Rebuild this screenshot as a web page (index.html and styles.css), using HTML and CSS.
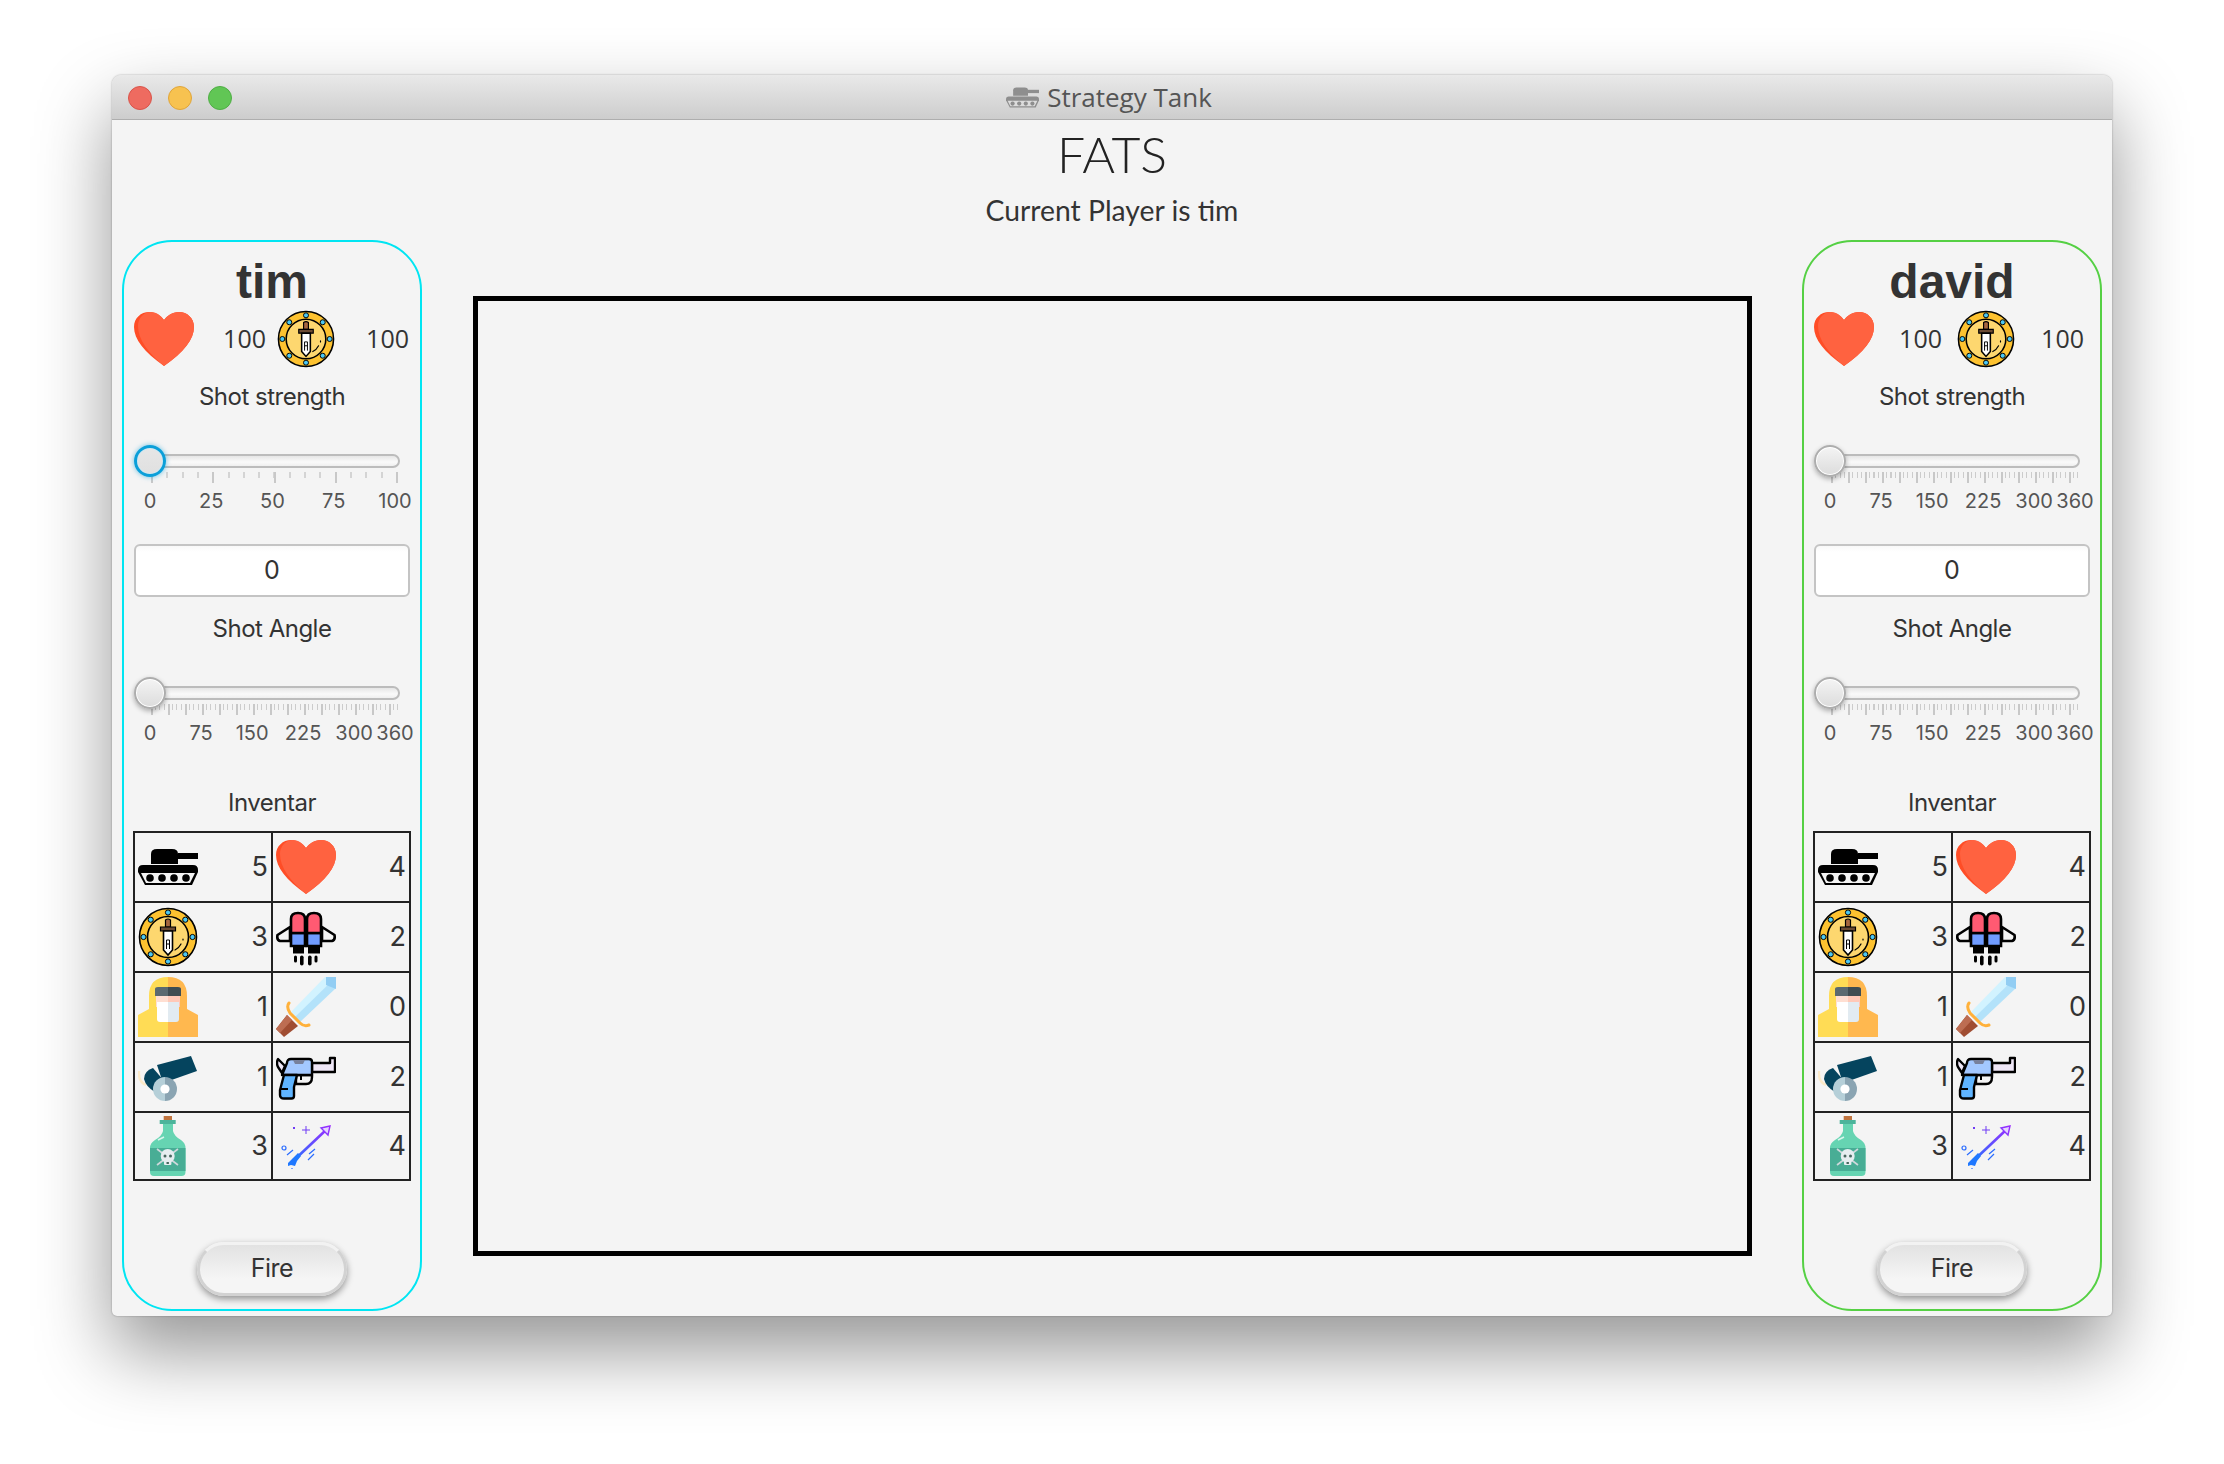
FILE: index.html
```html
<html>
<head>
    <meta charset="utf-8">
    <title>Strategy Tank</title>
    <link rel="stylesheet" href="styles.css">
</head>
<body>
    <svg class="sprites" xmlns="http://www.w3.org/2000/svg">
        <defs>
            <linearGradient id="arrow-grad" gradientUnits="userSpaceOnUse" x1="13" y1="49" x2="54" y2="10">
                <stop offset="0" stop-color="#1f78ff"/>
                <stop offset="1" stop-color="#9a2bff"/>
            </linearGradient>
        </defs>
        <symbol id="i-tank" viewBox="0 0 60 60">
            <path fill="currentColor" d="M13 27V17Q13 12 19 12H34Q40 12 40 17V27Z"/>
            <rect fill="currentColor" x="40" y="16" width="20" height="6"/>
            <path fill="currentColor" d="M5 28H55Q60 28 60 33V35L54 48H7L0 35V33Q0 28 5 28Z"/>
            <path fill="var(--track, #f4f4f4)" d="M3 36H57L52 46H8Z"/>
            <g fill="currentColor">
                <circle cx="12" cy="41" r="3.8"/>
                <circle cx="24" cy="41" r="3.8"/>
                <circle cx="36" cy="41" r="3.8"/>
                <circle cx="48" cy="41" r="3.8"/>
            </g>
        </symbol>
        <symbol id="i-heart" viewBox="0 0 60 60">
            <path fill="#ff4d26" d="M30 57C10 43 0 30 0 18C0 9 7 3 15 3C22 3 27 7 30 11C33 7 38 3 45 3C53 3 60 9 60 18C60 30 50 43 30 57Z"/>
            <path fill="#ff6240" d="M30 57C14 44 4 30 4 17C4 9 10 3 17 3C23 3 27 7 30 11C33 7 38 3 45 3C53 3 60 9 60 18C60 30 50 43 30 57Z"/>
        </symbol>
        <symbol id="i-coin" viewBox="0 0 60 60">
            <circle cx="30" cy="30" r="28.5" fill="#fdc230" stroke="#000" stroke-width="1.6"/>
            <circle cx="30" cy="30" r="20.5" fill="#fdd76f" stroke="#000" stroke-width="1.6"/>
            <g fill="#4cc8f2" stroke="#000" stroke-width="1">
                <circle cx="30" cy="5.5" r="2.6"/>
                <circle cx="47.3" cy="12.7" r="2.6"/>
                <circle cx="54.5" cy="30" r="2.6"/>
                <circle cx="47.3" cy="47.3" r="2.6"/>
                <circle cx="30" cy="54.5" r="2.6"/>
                <circle cx="12.7" cy="47.3" r="2.6"/>
                <circle cx="5.5" cy="30" r="2.6"/>
                <circle cx="12.7" cy="12.7" r="2.6"/>
            </g>
            <path fill="#a5673f" stroke="#000" stroke-width="1.2" d="M27.5 20V13Q30 11 32.5 13V20Z"/>
            <path fill="#6b4a32" stroke="#000" stroke-width="1.2" d="M22.5 20H37.5V24H22.5Z"/>
            <path fill="#fff" stroke="#000" stroke-width="1.6" d="M25.5 24H34.5V43L30 48L25.5 43Z"/>
            <path fill="none" stroke="#000" stroke-width="1" d="M28.5 42V33H31.5V42M28.5 37H31.5"/>
            <path fill="none" stroke="#000" stroke-width="1.2" stroke-linecap="round" d="M43 37Q41 41 37 43M45 32V33"/>
        </symbol>
        <symbol id="i-jet" viewBox="0 0 60 60">
            <path fill="#f4f4f4" stroke="#000" stroke-width="2.6" stroke-linejoin="round" d="M14 20L1.5 28Q0.5 33 4 34H14Z"/>
            <path fill="#f4f4f4" stroke="#000" stroke-width="2.6" stroke-linejoin="round" d="M46 20L58.5 28Q59.5 33 56 34H46Z"/>
            <path fill="#6f9bff" stroke="#000" stroke-width="2.6" d="M15 26H29V39H15Z"/>
            <path fill="#6f9bff" stroke="#000" stroke-width="2.6" d="M31 26H45V39H31Z"/>
            <path fill="#ff5a72" stroke="#000" stroke-width="2.6" d="M15 26V12Q15 6 22 6Q29 6 29 12V26Z"/>
            <path fill="#ff5a72" stroke="#000" stroke-width="2.6" d="M31 26V12Q31 6 38 6Q45 6 45 12V26Z"/>
            <rect x="17" y="40" width="11" height="6.5" fill="#000"/>
            <rect x="32" y="40" width="12" height="6.5" fill="#000"/>
            <g fill="#000">
                <rect x="18" y="48.5" width="3" height="7" rx="1.5"/>
                <rect x="24" y="48.5" width="3.6" height="10" rx="1.8"/>
                <rect x="32" y="48.5" width="3.6" height="10" rx="1.8"/>
                <rect x="38.5" y="48.5" width="3" height="7" rx="1.5"/>
            </g>
        </symbol>
        <symbol id="i-suit" viewBox="0 0 60 60">
            <path fill="#ffdc55" d="M30 0Q11 0 11 19V32L0 38V60H30Z"/>
            <path fill="#ffb84f" d="M30 0Q49 0 49 19V32L60 38V60H30Z"/>
            <path fill="#ffdfd2" d="M18 16H30V30H18Z"/>
            <path fill="#ffc9b8" d="M30 16H42V30H30Z"/>
            <path fill="#5b6a70" d="M17 12Q17 10 20 10H30V19H17Z"/>
            <path fill="#3f4d52" d="M30 10H40Q43 10 43 12V19H30Z"/>
            <path fill="#fff" d="M19 25H30V45H22Q19 45 19 42Z"/>
            <path fill="#e2ebf1" d="M30 25H41V42Q41 45 38 45H30Z"/>
        </symbol>
        <symbol id="i-sword" viewBox="0 0 60 60">
            <path fill="#d2f3ff" d="M49 0H60L24 44L15 35Z"/>
            <path fill="#b3e2fa" d="M60 0V11L24 45L19 40Z"/>
            <path fill="#92cdf3" d="M50 0H60V12L50 8Z"/>
            <path fill="#a04d32" d="M0 52L11 38L22 49L8 60Z"/>
            <path fill="#bd6d52" d="M0 52L11 38L16 43L4 56Z"/>
            <path fill="none" stroke="#ffb13b" stroke-width="3" stroke-linecap="round" d="M13 26Q10 30 14 36L24 46Q28 50 33 48"/>
        </symbol>
        <symbol id="i-cannon" viewBox="0 0 60 60">
            <path fill="none" stroke="#fbe9c8" stroke-width="2.4" d="M1 24Q0 35 8 38"/>
            <path fill="#05445e" d="M19 18L53 9L59 24L25 36Z"/>
            <path fill="#05445e" d="M15 21Q6 24 6 32Q8 40 17 45L27 35Z"/>
            <path fill="#b5cfd8" d="M27 30A12 12 0 0 0 27 54Z"/>
            <path fill="#8aa4b2" d="M27 30A12 12 0 0 1 27 54Z"/>
            <circle cx="27" cy="42" r="4.6" fill="#fff"/>
        </symbol>
        <symbol id="i-pistol" viewBox="0 0 60 60">
            <path fill="#efe7f7" stroke="#000" stroke-width="2.4" stroke-linejoin="round" d="M36 16H54V11H59V25H36Z"/>
            <path fill="#efe7f7" stroke="#000" stroke-width="2.4" stroke-linejoin="round" d="M9 19L2 12Q0 16 2 20L6 26Z"/>
            <path fill="#f4f4f4" stroke="#000" stroke-width="2.4" stroke-linejoin="round" d="M20 28H36V30Q36 37 30 37H20Z"/>
            <path fill="#a3c8ff" stroke="#000" stroke-width="2.4" stroke-linejoin="round" d="M11 16Q11 12 15 12H33Q36 12 36 15V28H6Z"/>
            <path fill="#78819c" d="M17 13H29L27 17H19Z"/>
            <path fill="#5fb4ff" stroke="#000" stroke-width="2.4" stroke-linejoin="round" d="M8 28H21L18 40V49Q18 51.5 15.5 51.5H8Q4 51.5 4 48V43Z"/>
            <path fill="none" stroke="#000" stroke-width="2" d="M4.5 42H12M25 28V33"/>
        </symbol>
        <symbol id="i-potion" viewBox="0 0 60 60">
            <rect x="25.7" y="0" width="8.3" height="4" fill="#c0743f"/>
            <rect x="21.7" y="4" width="16" height="4" fill="#4cb49b"/>
            <path fill="#66d4b2" d="M25 8H35V15Q36 20 43 24Q47.5 27 47.5 32V56Q47.5 60 43.5 60H16Q12 60 12 56V32Q12 27 17 24Q24 20 25 15Z"/>
            <path fill="#48ad95" d="M12 32H47.5V55H12Z"/>
            <path fill="none" stroke="#d8f5ec" stroke-width="1.6" d="M20 24L26 21"/>
            <path fill="none" stroke="#cfd8dc" stroke-width="1.6" d="M19 33L40 49M40 33L19 49"/>
            <circle cx="29.7" cy="40" r="7" fill="#e6edf0"/>
            <rect x="26" y="44" width="7.4" height="5" rx="1" fill="#e6edf0"/>
            <g fill="#48675f">
                <circle cx="27" cy="40" r="1.5"/>
                <circle cx="32.5" cy="40" r="1.5"/>
                <rect x="28.5" y="46" width="2.4" height="2"/>
            </g>
        </symbol>
        <symbol id="i-arrow" viewBox="0 0 60 60">
            <path fill="none" stroke="url(#arrow-grad)" stroke-width="2.6" d="M15 47L50 14"/>
            <path fill="#e6d4ff" stroke="url(#arrow-grad)" stroke-width="1.4" d="M45 12L54 10L52 19Z"/>
            <path fill="#1f78ff" d="M12 47L17 42L22 37L25 40L21 45L19 50L15 49L12 50Z"/>
            <g fill="none" stroke="#2a6cff" stroke-width="1.2">
                <circle cx="8" cy="32" r="2"/>
                <path d="M11 39L17 34M32 44L38 38M33 38L39 33M16 52V53"/>
            </g>
            <path stroke="#6f3bf5" stroke-width="1" d="M30 10V18M26 14H34"/>
            <rect x="17" y="11" width="2" height="2" fill="#6f3bf5"/>
        </symbol>
    </svg>

    <div class="window">
        <div class="titlebar">
            <div class="lights">
                <span class="light light-red"></span>
                <span class="light light-yellow"></span>
                <span class="light light-green"></span>
            </div>
            <svg class="title-icon"><use href="#i-tank"/></svg>
            <span class="title-text">Strategy Tank</span>
        </div>

        <div class="header">
            <div class="game-name">FATS</div>
            <div class="current-player">Current Player is tim</div>
        </div>

        <div class="main">
            <div class="player player-left">
                <div class="player-name">tim</div>
                <div class="stats">
                    <div class="stat stat-life">
                        <svg class="stat-icon"><use href="#i-heart"/></svg>
                        <span class="stat-value">100</span>
                    </div>
                    <div class="stat stat-armor">
                        <svg class="stat-icon"><use href="#i-coin"/></svg>
                        <span class="stat-value">100</span>
                    </div>
                </div>
                <div class="label label-strength">Shot strength</div>
                <div class="slider slider-strength">
                    <div class="thumb thumb-focus"></div>
                    <div class="track"></div>
                    <div class="ticks ticks-100"></div>
                    <div class="scale scale-100">
                        <span>0</span><span>25</span><span>50</span><span>75</span><span>100</span>
                    </div>
                </div>
                <div class="angle-input">0</div>
                <div class="label label-angle">Shot Angle</div>
                <div class="slider slider-angle">
                    <div class="thumb"></div>
                    <div class="track"></div>
                    <div class="ticks ticks-360"></div>
                    <div class="scale scale-360">
                        <span>0</span><span>75</span><span>150</span><span>225</span><span>300</span><span>360</span>
                    </div>
                </div>
                <div class="label label-inventory">Inventar</div>
                <div class="inventory">
                    <div class="cell"><svg class="item"><use href="#i-tank"/></svg><span>5</span></div>
                    <div class="cell"><svg class="item"><use href="#i-heart"/></svg><span>4</span></div>
                    <div class="cell"><svg class="item"><use href="#i-coin"/></svg><span>3</span></div>
                    <div class="cell"><svg class="item"><use href="#i-jet"/></svg><span>2</span></div>
                    <div class="cell"><svg class="item"><use href="#i-suit"/></svg><span>1</span></div>
                    <div class="cell"><svg class="item"><use href="#i-sword"/></svg><span>0</span></div>
                    <div class="cell"><svg class="item"><use href="#i-cannon"/></svg><span>1</span></div>
                    <div class="cell"><svg class="item"><use href="#i-pistol"/></svg><span>2</span></div>
                    <div class="cell"><svg class="item"><use href="#i-potion"/></svg><span>3</span></div>
                    <div class="cell"><svg class="item"><use href="#i-arrow"/></svg><span>4</span></div>
                </div>
                <div class="fire">Fire</div>
            </div>

            <div class="stage"></div>

            <div class="player player-right">
                <div class="player-name">david</div>
                <div class="stats">
                    <div class="stat stat-life">
                        <svg class="stat-icon"><use href="#i-heart"/></svg>
                        <span class="stat-value">100</span>
                    </div>
                    <div class="stat stat-armor">
                        <svg class="stat-icon"><use href="#i-coin"/></svg>
                        <span class="stat-value">100</span>
                    </div>
                </div>
                <div class="label label-strength">Shot strength</div>
                <div class="slider slider-strength">
                    <div class="thumb"></div>
                    <div class="track"></div>
                    <div class="ticks ticks-360"></div>
                    <div class="scale scale-360">
                        <span>0</span><span>75</span><span>150</span><span>225</span><span>300</span><span>360</span>
                    </div>
                </div>
                <div class="angle-input">0</div>
                <div class="label label-angle">Shot Angle</div>
                <div class="slider slider-angle">
                    <div class="thumb"></div>
                    <div class="track"></div>
                    <div class="ticks ticks-360"></div>
                    <div class="scale scale-360">
                        <span>0</span><span>75</span><span>150</span><span>225</span><span>300</span><span>360</span>
                    </div>
                </div>
                <div class="label label-inventory">Inventar</div>
                <div class="inventory">
                    <div class="cell"><svg class="item"><use href="#i-tank"/></svg><span>5</span></div>
                    <div class="cell"><svg class="item"><use href="#i-heart"/></svg><span>4</span></div>
                    <div class="cell"><svg class="item"><use href="#i-coin"/></svg><span>3</span></div>
                    <div class="cell"><svg class="item"><use href="#i-jet"/></svg><span>2</span></div>
                    <div class="cell"><svg class="item"><use href="#i-suit"/></svg><span>1</span></div>
                    <div class="cell"><svg class="item"><use href="#i-sword"/></svg><span>0</span></div>
                    <div class="cell"><svg class="item"><use href="#i-cannon"/></svg><span>1</span></div>
                    <div class="cell"><svg class="item"><use href="#i-pistol"/></svg><span>2</span></div>
                    <div class="cell"><svg class="item"><use href="#i-potion"/></svg><span>3</span></div>
                    <div class="cell"><svg class="item"><use href="#i-arrow"/></svg><span>4</span></div>
                </div>
                <div class="fire">Fire</div>
            </div>
        </div>
    </div>
</body>
</html>
```
FILE: styles.css
```css
html, body {
    margin: 0;
    height: 100%;
    background: #fff;
    overflow: hidden;
}
body {
    padding: 75px 112px 0;
    box-sizing: border-box;
    font-family: Inter, sans-serif;
    color: #333;
}
.sprites {
    position: absolute;
    width: 0;
    height: 0;
}
.window {
    width: 2000px;
    height: 1241px;
    background: #f4f4f4;
    border-radius: 9px 9px 5px 5px;
    box-shadow: 0 35px 75px rgba(0, 0, 0, 0.42), 0 0 2px rgba(0, 0, 0, 0.35);
    overflow: hidden;
}

/* title bar */
.titlebar {
    position: relative;
    height: 44px;
    padding-right: 6px;
    display: flex;
    align-items: center;
    justify-content: center;
    gap: 8px;
    background: linear-gradient(#e9e9e9, #cdcdcd);
    border-bottom: 1px solid #aeaeae;
}
.lights {
    position: absolute;
    left: 16px;
    top: 11px;
    display: flex;
    gap: 16px;
}
.light {
    width: 24px;
    height: 24px;
    border-radius: 50%;
    box-sizing: border-box;
    border: 1px solid;
}
.light-red { background: #ee6b60; border-color: #d9544a; }
.light-yellow { background: #f7c250; border-color: #e0a53a; }
.light-green { background: #61c655; border-color: #4fae45; }
.title-icon {
    width: 33px;
    height: 33px;
    color: #8e8e8e;
    --track: #dcdcdc;
}
.title-text {
    font-family: "Open Sans", sans-serif;
    font-size: 26px;
    color: #555;
}

/* heading */
.header {
    height: 120px;
    text-align: center;
    font-family: Lato, sans-serif;
    color: #222;
}
.game-name {
    padding-top: 4px;
    height: 60px;
    line-height: 60px;
    font-size: 50px;
    font-weight: 300;
}
.current-player {
    margin-top: 9px;
    line-height: 34px;
    font-size: 28.3px;
    color: #333;
}

/* main row */
.main {
    display: flex;
    justify-content: space-between;
    align-items: center;
    padding: 0 10px;
}
.stage {
    width: 1269px;
    height: 950px;
    border: 5px solid #000;
}

/* player column */
.player {
    width: 300px;
    box-sizing: border-box;
    padding: 0 9px 13px;
    border: 2px solid #00e5f2;
    border-radius: 50px;
}
.player-right {
    border-color: #55d044;
}
.player-name {
    margin-top: 14px;
    line-height: 52px;
    text-align: center;
    font-family: "Liberation Sans", sans-serif;
    font-weight: bold;
    font-size: 48px;
    color: #333;
}
.stats {
    display: flex;
    height: 60px;
    margin-top: 1px;
    align-items: center;
    font-family: "Open Sans", sans-serif;
    font-size: 25px;
}
.stat {
    display: flex;
    align-items: center;
    justify-content: space-between;
}
.stat-life {
    width: 144px;
    padding-right: 11px;
    box-sizing: border-box;
}
.stat-armor {
    width: 132px;
}
.player-right .stat-life {
    padding-right: 15px;
}
.player-right .stat-armor {
    padding-right: 5px;
    box-sizing: border-box;
}
.stat-icon {
    width: 60px;
    height: 60px;
    margin-left: 1px;
}
.stat-armor .stat-icon {
    width: 58px;
    height: 58px;
    margin-left: 0;
}
.stat-value {
    margin-bottom: 3px;
}
.label {
    line-height: 32px;
    text-align: center;
    font-size: 24px;
    letter-spacing: -0.5px;
    color: #333;
}
.label-strength { margin-top: 12px; }
.label-angle { margin-top: 16px; }
.label-inventory { margin-top: 42px; }

/* sliders */
.slider {
    position: relative;
    margin-top: 32px;
    padding: 9px 0 0 2px;
}
.thumb {
    position: absolute;
    z-index: 1;
    left: 1px;
    top: 0;
    width: 32px;
    height: 32px;
    box-sizing: border-box;
    border-radius: 50%;
    border: 2px solid #adadad;
    background: linear-gradient(#f4f4f4, #dcdcdc);
    box-shadow: 0 2px 5px rgba(0, 0, 0, 0.3), inset 0 0 0 1px #fff;
}
.thumb-focus {
    border: 3px solid #0a9fd9;
    background: linear-gradient(#e6e6e6, #e0e0e0);
    box-shadow: 0 0 5px rgba(10, 159, 217, 0.6), inset 0 0 0 1px #d0e8f2;
}
.track {
    width: 265px;
    height: 14px;
    box-sizing: border-box;
    border: 2px solid #bcbcbc;
    border-radius: 7px;
    background: linear-gradient(#e6e6e6, #fafafa 60%, #efefef);
}
.ticks {
    width: 247px;
    height: 11px;
    margin: 4px 0 0 16px;
}
.ticks-100 {
    background:
        repeating-linear-gradient(90deg, #c8c8c8 0 2px, transparent 2px 61.25px),
        repeating-linear-gradient(90deg, #d4d4d4 0 2px, transparent 2px 15.31px) 0 0 / 100% 6px no-repeat;
}
.ticks-360 {
    background:
        repeating-linear-gradient(90deg, #c8c8c8 0 2px, transparent 2px 17.01px),
        repeating-linear-gradient(90deg, #ccc 0 1px, transparent 1px 4.25px) 0 0 / 100% 6px no-repeat;
}
.scale {
    display: grid;
    width: 245px;
    margin: 6px 0 0 15px;
    line-height: 24px;
    font-size: 20px;
    color: #555;
}
.scale span {
    display: flex;
    justify-content: center;
    width: 0;
}
.scale-100 { grid-template-columns: repeat(4, 1fr) 0; }
.scale-360 { grid-template-columns: repeat(4, 75fr) 60fr 0; }

/* shot input */
.angle-input {
    height: 53px;
    margin: 31px 1px 0;
    box-sizing: border-box;
    line-height: 49px;
    text-align: center;
    font-size: 25px;
    background: linear-gradient(#f8f8f8, #fff 12%);
    border: 2px solid #c4c4c4;
    border-radius: 6px;
}

/* inventory table */
.inventory {
    display: grid;
    grid-template-columns: 1fr 1fr;
    grid-template-rows: repeat(4, 68px) 66px;
    gap: 2px;
    width: 278px;
    box-sizing: border-box;
    margin-top: 12px;
    background: #222;
    border: 2px solid #222;
    color: #333;
}
.cell {
    display: flex;
    align-items: center;
    justify-content: space-between;
    padding: 0 3px 1px 3px;
    background: #f4f4f4;
    font-size: 27px;
}
.item {
    width: 60px;
    height: 60px;
    color: #000;
}

/* fire button */
.fire {
    width: 150px;
    height: 54px;
    box-sizing: border-box;
    margin: 61px auto 0;
    line-height: 46px;
    text-align: center;
    font-size: 25px;
    letter-spacing: -0.5px;
    border: 3px solid #d2d2d2;
    border-top-color: #f2f2f2;
    border-radius: 27px;
    background: linear-gradient(#e2e2e2, #f5f5f5 70%);
    box-shadow: 0 3px 7px rgba(0, 0, 0, 0.4);
}
```
